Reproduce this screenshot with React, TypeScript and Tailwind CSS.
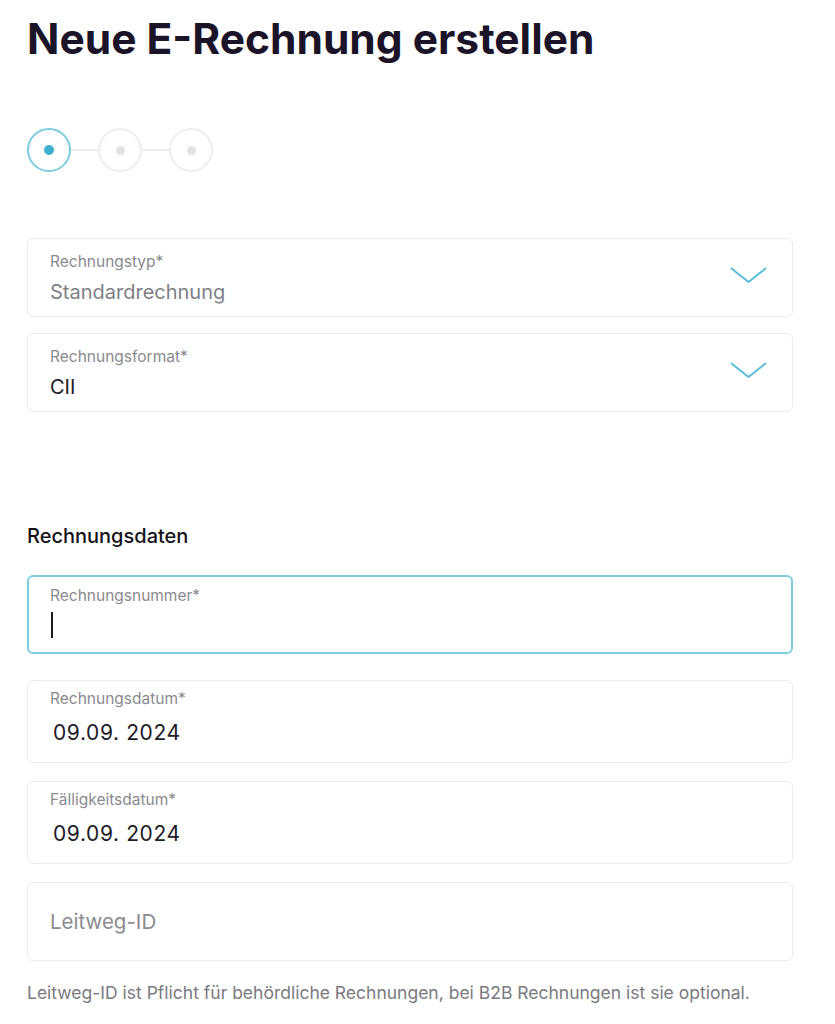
import React from 'react';

const font = { fontFamily: 'Inter, "Noto Sans", sans-serif' };

function Chevron() {
  return (
    <svg width="37" height="17" viewBox="0 0 37 17" fill="none" className="shrink-0">
      <path d="M1.5 1.5 L18.5 15 L35.5 1.5" stroke="#5bbdd6" strokeWidth="2" strokeLinecap="round" strokeLinejoin="round" />
    </svg>
  );
}

function SelectField({ label, value, muted }: { label: string; value: string; muted?: boolean }) {
  return (
    <div className="flex h-[79px] items-center justify-between rounded-md border border-[#ebebeb] pl-[22px] pr-[25px]">
      <div className="flex flex-col">
        <span className="text-[15.5px] leading-[20px] text-[#8a8a8f]">{label}</span>
        <span className={`mt-[8px] text-[20px] leading-[24px] ${muted ? 'text-[#808086]' : 'text-[#1d1b26]'}`}>{value}</span>
      </div>
      <div className="mt-[-4px]">
        <Chevron />
      </div>
    </div>
  );
}

function DateField({ label, value }: { label: string; value: string }) {
  return (
    <div className="flex h-[83px] flex-col rounded-md border border-[#ebebeb] pl-[22px] pt-[8px]">
      <span className="text-[15.5px] leading-[20px] text-[#8a8a8f]">{label}</span>
      <span className="mt-[11px] pl-[3px] text-[21px] leading-[26px] tracking-[0.6px] text-[#1d1b26]">{value}</span>
    </div>
  );
}

export default function App() {
  return (
    <div className="min-h-screen w-[835px] bg-white" style={font}>
      <div className="px-[27px] pb-6">
        <h1 className="pt-[14px] text-[42.5px] font-bold leading-[50px] text-[#1b1428]">
          Neue E-Rechnung erstellen
        </h1>

        {/* Stepper */}
        <div className="mt-[64px] flex items-center">
          <div className="flex h-[44px] w-[44px] items-center justify-center rounded-full border-2 border-[#7ccde0]">
            <span className="h-[10px] w-[10px] rounded-full bg-[#3eb0cf]" />
          </div>
          <div className="h-[2px] w-[27px] bg-[#ececec]" />
          <div className="flex h-[44px] w-[44px] items-center justify-center rounded-full border-2 border-[#ededed]">
            <span className="h-[9px] w-[9px] rounded-full bg-[#e2e2e4]" />
          </div>
          <div className="h-[2px] w-[27px] bg-[#ececec]" />
          <div className="flex h-[44px] w-[44px] items-center justify-center rounded-full border-2 border-[#ededed]">
            <span className="h-[9px] w-[9px] rounded-full bg-[#e2e2e4]" />
          </div>
        </div>

        <div className="mt-[66px] flex w-[766px] flex-col gap-[16px]">
          <SelectField label="Rechnungstyp*" value="Standardrechnung" muted />
          <SelectField label="Rechnungsformat*" value="CII" />
        </div>

        <h2 className="mt-[112px] text-[20px] font-medium leading-[24px] text-[#141218]">Rechnungsdaten</h2>

        <div className="mt-[27px] flex w-[766px] flex-col">
          <div className="flex h-[79px] flex-col rounded-md border-2 border-[#7fcde0] pl-[21px] pt-[9px]">
            <span className="text-[15.5px] leading-[20px] text-[#8a8a8f]">Rechnungsnummer*</span>
            <span className="mt-[6px] ml-[1px] h-[26px] w-[2px] bg-[#1d1b26]" />
          </div>
          <div className="mt-[26px]">
            <DateField label="Rechnungsdatum*" value="09.09. 2024" />
          </div>
          <div className="mt-[18px]">
            <DateField label="Fälligkeitsdatum*" value="09.09. 2024" />
          </div>
          <div className="mt-[18px] flex h-[79px] items-center rounded-md border border-[#ebebeb] pl-[22px]">
            <span className="text-[20.5px] leading-[24px] text-[#8a8a8f]">Leitweg-ID</span>
          </div>
          <p className="mt-[22px] text-[17.5px] leading-[20px] text-[#7a7a80]">
            Leitweg-ID ist Pflicht für behördliche Rechnungen, bei B2B Rechnungen ist sie optional.
          </p>
        </div>
      </div>
    </div>
  );
}
